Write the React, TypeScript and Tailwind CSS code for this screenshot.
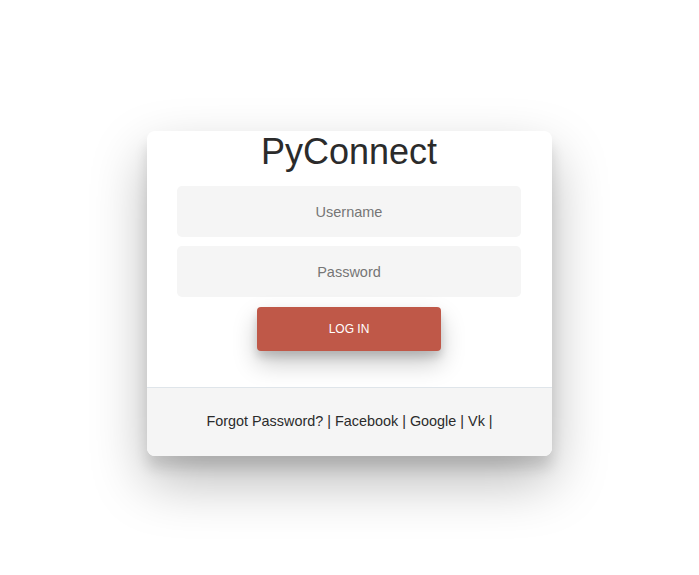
import React from "react";

const links = ["Forgot Password?", "Facebook", "Google", "Vk"];

const App = () => {
  return (
    <div className="min-h-screen w-full bg-white pt-[131px] font-['Liberation_Sans',Arial,sans-serif]">
      {/* LOGIN CARD */}
      <div className="mx-auto w-[405px] overflow-hidden rounded-[8px] bg-white shadow-[0_25px_55px_rgba(0,0,0,0.28),0_12px_14px_rgba(0,0,0,0.12)]">
        <div className="flex flex-col items-center pl-[30px] pr-[31px] pb-[36px]">
          <h1 className="text-[36px] leading-[41px] text-[#2b2b2b]">PyConnect</h1>
          <input
            type="text"
            placeholder="Username"
            className="mt-[14px] h-[51px] w-[344px] rounded-[5px] bg-[#f5f5f5] text-center text-[14.5px] text-[#333] outline-none placeholder:text-[#767676]"
          />
          <input
            type="password"
            placeholder="Password"
            className="mt-[9px] h-[51px] w-[344px] rounded-[5px] bg-[#f5f5f5] text-center text-[14.5px] text-[#333] outline-none placeholder:text-[#767676]"
          />
          <button className="mt-[10px] h-[44px] w-[184px] rounded-[4px] bg-[#bf5848] text-[12px] uppercase text-white shadow-[0_12px_24px_rgba(0,0,0,0.22),0_6px_8px_rgba(0,0,0,0.14)]">
            Log in
          </button>
        </div>

        {/* FOOTER LINKS */}
        <div className="flex h-[69px] items-center justify-center border-t border-[#dfe5ea] bg-[#f5f5f5] text-[14.4px] text-[#2b2b2b]">
          {links.map((l, i) => (
            <span key={l} className="whitespace-pre">
              {l} |{i < links.length - 1 ? " " : ""}
            </span>
          ))}
        </div>
      </div>
    </div>
  );
};

export default App;
